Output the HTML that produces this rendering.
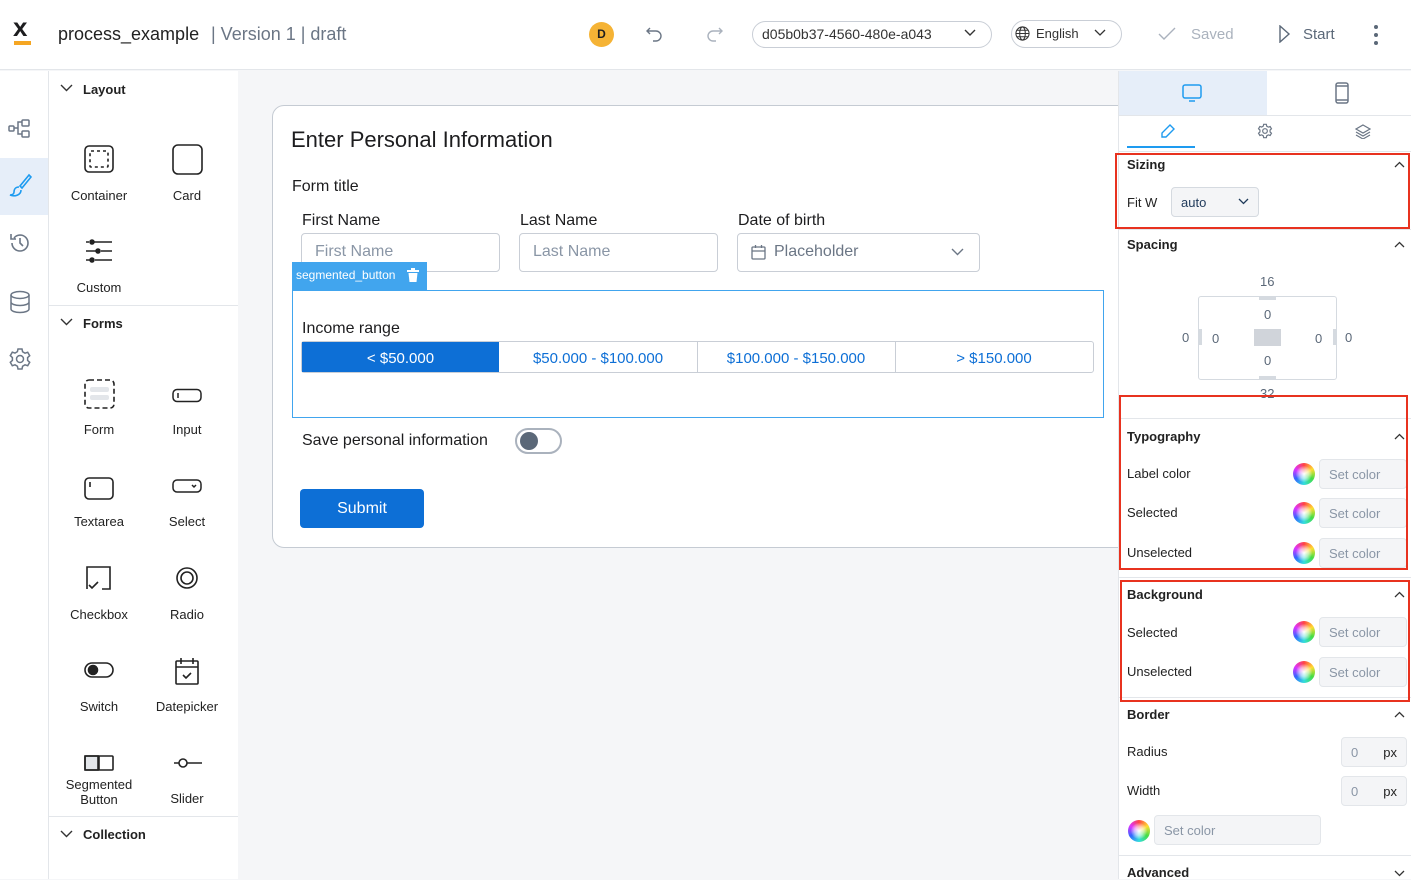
<!DOCTYPE html>
<html><head><meta charset="utf-8"><style>
*{box-sizing:border-box;margin:0;padding:0}
body{width:1411px;height:879px;overflow:hidden;position:relative;font-family:"Liberation Sans",sans-serif;color:#1d1d1f;background:#f5f6f8}
.a{position:absolute}
.t{position:absolute;white-space:nowrap}
svg{position:absolute}
.lbl{font-size:13px;color:#222;text-align:center;width:88px}
.sec{font-size:13px;font-weight:bold;color:#222}
.rp .t{font-size:13px;color:#222}
.sc{position:absolute;width:88px;height:30px;background:#f4f5f7;border:1px solid #e3e6ea;border-radius:4px;font-size:13px;color:#8a96a6;padding:7px 9px}
.wh{position:absolute;width:22px;height:22px;border-radius:50%;background:conic-gradient(#f44,#fd3,#4d4,#3dd,#36f,#d3f,#f44)}
.wh::after{content:"";position:absolute;inset:3px;border-radius:50%;background:radial-gradient(#fff 0,rgba(255,255,255,.6) 40%,rgba(255,255,255,0) 75%)}
.red{position:absolute;border:2px solid #e8321f}
.hr{position:absolute;height:1px;background:#e3e6ea}
</style></head><body>
<!-- header -->
<div class="a" style="left:0;top:0;width:1411px;height:70px;background:#fff;border-bottom:1px solid #e3e6ea"></div>
<div class="t" style="left:13px;top:14px;font-size:26px;font-weight:bold;line-height:26px">x</div>
<div class="a" style="left:14px;top:41px;width:17px;height:4px;background:#f5a623"></div>
<div class="t" style="left:58px;top:24px;font-size:18px;color:#222">process_example</div>
<div class="t" style="left:211px;top:24px;font-size:18px;color:#6b7685">| Version 1 | draft</div>
<div class="a" style="left:589px;top:22px;width:25px;height:25px;border-radius:50%;background:#f5b335;font-size:12px;font-weight:bold;text-align:center;line-height:25px">D</div>
<svg style="left:646px;top:26px" width="18" height="16" viewBox="0 0 18 16" fill="none" stroke="#6b7685" stroke-width="1.4"><path d="M4 2L1 5l3 3M1 5h9a5 5 0 010 10H7"/></svg>
<svg style="left:705px;top:26px" width="18" height="16" viewBox="0 0 18 16" fill="none" stroke="#aab2bd" stroke-width="1.4"><path d="M14 2l3 3-3 3M17 5H8a5 5 0 000 10h3"/></svg>
<div class="a" style="left:752px;top:21px;width:240px;height:27px;border:1px solid #c9ced6;border-radius:14px;background:#fff"></div>
<div class="t" style="left:762px;top:26px;font-size:14px;color:#333">d05b0b37-4560-480e-a043</div>
<svg style="left:964px;top:29px" width="12" height="8" fill="none" stroke="#333" stroke-width="1.4"><path d="M1 1l5 5 5-5"/></svg>
<div class="a" style="left:1011px;top:20px;width:111px;height:28px;border:1px solid #c9ced6;border-radius:14px;background:#fff"></div>
<svg style="left:1015px;top:26px" width="15" height="15" viewBox="0 0 16 16" fill="none" stroke="#333" stroke-width="1.1"><circle cx="8" cy="8" r="7"/><ellipse cx="8" cy="8" rx="3" ry="7"/><path d="M1 8h14M2 4.5h12M2 11.5h12"/></svg>
<div class="t" style="left:1036px;top:26px;font-size:13px;color:#333">English</div>
<svg style="left:1094px;top:29px" width="12" height="8" fill="none" stroke="#333" stroke-width="1.3"><path d="M1 1l5 5 5-5"/></svg>
<svg style="left:1158px;top:27px" width="18" height="14" fill="none" stroke="#aab2bd" stroke-width="1.4"><path d="M1 7l5 5 11-11"/></svg>
<div class="t" style="left:1191px;top:26px;font-size:15px;color:#aab2bd">Saved</div>
<svg style="left:1279px;top:25px" width="12" height="18" fill="none" stroke="#5b6878" stroke-width="1.4"><path d="M1 1l9 8-9 8z"/></svg>
<div class="t" style="left:1303px;top:26px;font-size:15px;color:#5b6878">Start</div>
<div class="a" style="left:1374px;top:25px;width:4px;height:4px;border-radius:2px;background:#5b6878;box-shadow:0 8px 0 #5b6878,0 16px 0 #5b6878"></div>

<!-- left rail -->
<div class="a" style="left:0;top:71px;width:48px;height:808px;background:#fff"></div>
<div class="a" style="left:0;top:158px;width:48px;height:57px;background:#e6eef9"></div>
<svg style="left:8px;top:118px" width="24" height="22" fill="none" stroke="#6b7685" stroke-width="1.5"><rect x="1" y="8" width="5" height="5" rx="1"/><rect x="14" y="2" width="7" height="6" rx="1"/><rect x="14" y="13" width="7" height="6" rx="1"/><path d="M6 10h4v-6h4M10 10v6h4"/></svg>
<svg style="left:8px;top:173px" width="24" height="26" fill="none" stroke="#1e9bf0" stroke-width="1.6"><path d="M21 2l-9 11 2 2 9-11zM11 14c-4 0-5 3-5 5s-2 3-4 3c5 2 11 0 11-5"/></svg>
<svg style="left:9px;top:232px" width="22" height="22" fill="none" stroke="#6b7685" stroke-width="1.6"><path d="M3 11a8 8 0 108-8 8 8 0 00-6 3M2 2v5h5M11 6v5l3 3"/></svg>
<svg style="left:9px;top:290px" width="22" height="24" fill="none" stroke="#6b7685" stroke-width="1.5"><ellipse cx="11" cy="5" rx="9" ry="3.5"/><path d="M2 5v14c0 2 4 3.5 9 3.5s9-1.5 9-3.5V5M2 12c0 2 4 3.5 9 3.5s9-1.5 9-3.5"/></svg>
<svg style="left:8px;top:347px" width="24" height="24" viewBox="0 0 24 24" fill="none" stroke="#6b7685" stroke-width="1.5"><circle cx="12" cy="12" r="3.5"/><path d="M10 2h4l.6 2.8 2.4 1.4 2.7-.9 2 3.4-2.1 1.9v2.8l2.1 1.9-2 3.4-2.7-.9-2.4 1.4L14 22h-4l-.6-2.8-2.4-1.4-2.7.9-2-3.4 2.1-1.9v-2.8L2.3 8.6l2-3.4 2.7.9 2.4-1.4z"/></svg>

<!-- components panel -->
<div class="a" style="left:48px;top:71px;width:190px;height:808px;background:#fff;border-left:1px solid #e3e6ea"></div>
<svg style="left:60px;top:84px" width="13" height="9" fill="none" stroke="#333" stroke-width="1.4"><path d="M1 1l5.5 5.5L12 1"/></svg>
<div class="t sec" style="left:83px;top:82px">Layout</div>
<svg style="left:84px;top:145px" width="30" height="28" fill="none" stroke="#222" stroke-width="1.6"><rect x="1" y="1" width="28" height="26" rx="4"/><rect x="6" y="6" width="18" height="16" rx="1" stroke-dasharray="3 3"/></svg>
<div class="t lbl" style="left:55px;top:188px">Container</div>
<svg style="left:172px;top:144px" width="32" height="32" fill="none" stroke="#222" stroke-width="1.6"><rect x="1" y="1" width="29" height="29" rx="5"/></svg>
<div class="t lbl" style="left:143px;top:188px">Card</div>
<svg style="left:85px;top:238px" width="28" height="26" fill="none" stroke="#222" stroke-width="1.5"><path d="M1 4h3M9 4h18M1 13h10M16 13h11M1 22h4M10 22h17"/><circle cx="7" cy="4" r="2" fill="#222"/><circle cx="13" cy="13" r="2" fill="#222"/><circle cx="7" cy="22" r="2" fill="#222"/></svg>
<div class="t lbl" style="left:55px;top:280px">Custom</div>
<div class="hr" style="left:49px;top:305px;width:189px"></div>
<svg style="left:60px;top:318px" width="13" height="9" fill="none" stroke="#333" stroke-width="1.4"><path d="M1 1l5.5 5.5L12 1"/></svg>
<div class="t sec" style="left:83px;top:316px">Forms</div>
<svg style="left:84px;top:379px" width="32" height="30" fill="none" stroke="#222" stroke-width="1.6"><rect x="1" y="1" width="29" height="28" rx="4" stroke-dasharray="5 3"/><rect x="6" y="8" width="19" height="5" rx="2" fill="#e3e6ea" stroke="none"/><rect x="6" y="16" width="19" height="5" rx="2" fill="#e3e6ea" stroke="none"/></svg>
<div class="t lbl" style="left:55px;top:422px">Form</div>
<svg style="left:172px;top:388px" width="30" height="16" fill="none" stroke="#222" stroke-width="1.5"><rect x="1" y="1.5" width="28" height="12" rx="4"/><path d="M6 5v5"/></svg>
<div class="t lbl" style="left:143px;top:422px">Input</div>
<svg style="left:84px;top:477px" width="30" height="24" fill="none" stroke="#222" stroke-width="1.6"><rect x="1" y="1" width="28" height="21" rx="4"/><path d="M6 5v5"/></svg>
<div class="t lbl" style="left:55px;top:514px">Textarea</div>
<svg style="left:172px;top:479px" width="30" height="15" fill="none" stroke="#222" stroke-width="1.5"><rect x="1" y="1" width="28" height="12" rx="4"/><path d="M20 6l2 2 2-2"/></svg>
<div class="t lbl" style="left:143px;top:514px">Select</div>
<svg style="left:86px;top:566px" width="26" height="26" fill="none" stroke="#222" stroke-width="1.6"><path d="M7 1h17v22h-8M1 17V1h6M1 17v6M3 19l3 3 6-6"/></svg>
<div class="t lbl" style="left:55px;top:607px">Checkbox</div>
<svg style="left:176px;top:567px" width="22" height="22" fill="none" stroke="#222" stroke-width="1.6"><circle cx="11" cy="11" r="10"/><circle cx="11" cy="11" r="6"/></svg>
<div class="t lbl" style="left:143px;top:607px">Radio</div>
<svg style="left:84px;top:661px" width="30" height="18" fill="none" stroke="#222" stroke-width="1.6"><rect x="1" y="2" width="28" height="14" rx="7"/><circle cx="9" cy="9" r="4.5" fill="#222"/></svg>
<div class="t lbl" style="left:55px;top:699px">Switch</div>
<svg style="left:175px;top:657px" width="24" height="28" fill="none" stroke="#222" stroke-width="1.6"><rect x="1" y="4" width="22" height="23" rx="1"/><path d="M1 10h22M6 1v6M18 1v6M8 18l3 3 5-5"/></svg>
<div class="t lbl" style="left:143px;top:699px">Datepicker</div>
<svg style="left:84px;top:755px" width="30" height="17" fill="none" stroke="#222" stroke-width="1.6"><rect x="1" y="1" width="13" height="14" fill="#e3e6ea"/><rect x="1" y="1" width="28" height="14" rx="1"/><path d="M15 1v14"/></svg>
<div class="t lbl" style="left:55px;top:777px;line-height:15px;white-space:normal">Segmented Button</div>
<svg style="left:173px;top:757px" width="30" height="12" fill="none" stroke="#222" stroke-width="1.6"><path d="M1 6h5M14 6h15"/><circle cx="10" cy="6" r="4"/></svg>
<div class="t lbl" style="left:143px;top:791px">Slider</div>
<div class="hr" style="left:49px;top:816px;width:189px"></div>
<svg style="left:60px;top:830px" width="13" height="9" fill="none" stroke="#333" stroke-width="1.4"><path d="M1 1l5.5 5.5L12 1"/></svg>
<div class="t sec" style="left:83px;top:827px">Collection</div>

<!-- canvas form -->
<div class="a" style="left:272px;top:105px;width:900px;height:443px;background:#fff;border:1px solid #c5cbd3;border-radius:12px"></div>
<div class="t" style="left:291px;top:127px;font-size:22px;color:#1d1d1f">Enter Personal Information</div>
<div class="t" style="left:292px;top:178px;font-size:16px">Form title</div>
<div class="t" style="left:302px;top:212px;font-size:16px">First Name</div>
<div class="t" style="left:520px;top:212px;font-size:16px">Last Name</div>
<div class="t" style="left:738px;top:212px;font-size:16px">Date of birth</div>
<div class="a" style="left:301px;top:233px;width:199px;height:39px;border:1px solid #c9ced6;border-radius:4px;background:#fff"></div>
<div class="t" style="left:315px;top:243px;font-size:16px;color:#8a96a6">First Name</div>
<div class="a" style="left:519px;top:233px;width:199px;height:39px;border:1px solid #c9ced6;border-radius:4px;background:#fff"></div>
<div class="t" style="left:533px;top:243px;font-size:16px;color:#8a96a6">Last Name</div>
<div class="a" style="left:737px;top:233px;width:243px;height:39px;border:1px solid #c9ced6;border-radius:4px;background:#fff"></div>
<svg style="left:751px;top:244px" width="15" height="16" fill="none" stroke="#6b7685" stroke-width="1.3"><rect x="1" y="3" width="13" height="12" rx="1"/><path d="M1 7h13M4.5 1v3M10.5 1v3"/></svg>
<div class="t" style="left:774px;top:243px;font-size:16px;color:#6b7685">Placeholder</div>
<svg style="left:951px;top:248px" width="13" height="8" fill="none" stroke="#6b7685" stroke-width="1.4"><path d="M1 1l5.5 5.5L12 1"/></svg>
<div class="a" style="left:292px;top:290px;width:812px;height:128px;border:1px solid #41a5ee"></div>
<div class="a" style="left:292px;top:262px;width:135px;height:28px;background:#41a5ee"></div>
<div class="t" style="left:296px;top:268px;font-size:12px;color:#fff">segmented_button</div>
<svg style="left:407px;top:268px" width="12" height="14" fill="#fff"><rect x="0" y="2" width="12" height="2"/><rect x="4" y="0" width="4" height="2"/><path d="M1.5 5h9l-1 9h-7z"/></svg>
<div class="t" style="left:302px;top:320px;font-size:16px">Income range</div>
<div class="a" style="left:301px;top:341px;width:793px;height:32px;border:1px solid #c9ced6;border-radius:3px;background:#fff"></div>
<div class="a" style="left:302px;top:342px;width:197px;height:30px;background:#0d6fd6"></div>
<div class="t" style="left:302px;top:350px;width:197px;text-align:center;font-size:15px;color:#fff">&lt; $50.000</div>
<div class="a" style="left:697px;top:342px;width:1px;height:30px;background:#c9ced6"></div>
<div class="a" style="left:895px;top:342px;width:1px;height:30px;background:#c9ced6"></div>
<div class="t" style="left:499px;top:350px;width:198px;text-align:center;font-size:15px;color:#0d6fd6">$50.000 - $100.000</div>
<div class="t" style="left:697px;top:350px;width:198px;text-align:center;font-size:15px;color:#0d6fd6">$100.000 - $150.000</div>
<div class="t" style="left:895px;top:350px;width:198px;text-align:center;font-size:15px;color:#0d6fd6">&gt; $150.000</div>
<div class="t" style="left:302px;top:432px;font-size:16px">Save personal information</div>
<div class="a" style="left:515px;top:428px;width:47px;height:26px;border:2px solid #aab2bd;border-radius:13px;background:#fff"></div>
<div class="a" style="left:520px;top:432px;width:18px;height:18px;border-radius:50%;background:#5b6878"></div>
<div class="a" style="left:300px;top:489px;width:124px;height:39px;background:#0d6fd6;border-radius:4px;color:#fff;font-size:16px;text-align:center;line-height:39px">Submit</div>

<!-- right panel -->
<div class="a rp" style="left:1118px;top:71px;width:293px;height:808px;background:#fff;border-left:1px solid #e3e6ea">
<div class="a" style="left:0;top:0;width:148px;height:44px;background:#e6eef9"></div>
<div class="hr" style="left:0;top:44px;width:293px"></div>
<svg style="left:63px;top:13px" width="20" height="18" fill="none" stroke="#1e9bf0" stroke-width="1.5"><rect x="1" y="1" width="18" height="13" rx="2"/><path d="M7 17h6"/></svg>
<svg style="left:216px;top:11px" width="14" height="22" fill="none" stroke="#6b7685" stroke-width="1.5"><rect x="1" y="1" width="12" height="20" rx="2"/><path d="M1 4h12M1 18h12"/></svg>
<svg style="left:41px;top:53px" width="15" height="15" fill="none" stroke="#1e9bf0" stroke-width="1.4"><path d="M10 1l4 4-8 8H2v-4z"/></svg>
<div class="a" style="left:8px;top:75px;width:68px;height:2px;background:#1e9bf0"></div>
<svg style="left:138px;top:52px" width="16" height="16" viewBox="0 0 24 24" fill="none" stroke="#6b7685" stroke-width="1.8"><circle cx="12" cy="12" r="3.5"/><path d="M10 2h4l.6 2.8 2.4 1.4 2.7-.9 2 3.4-2.1 1.9v2.8l2.1 1.9-2 3.4-2.7-.9-2.4 1.4L14 22h-4l-.6-2.8-2.4-1.4-2.7.9-2-3.4 2.1-1.9v-2.8L2.3 8.6l2-3.4 2.7.9 2.4-1.4z"/></svg>
<svg style="left:236px;top:53px" width="16" height="15" fill="none" stroke="#6b7685" stroke-width="1.2"><path d="M8 1l7 4-7 4-7-4zM1 8l7 4 7-4M1 11l7 4 7-4"/></svg>
<div class="hr" style="left:0;top:80px;width:293px"></div>
<div class="t sec" style="left:8px;top:86px">Sizing</div>
<div class="a" style="left:52px;top:116px;width:88px;height:30px;background:#f4f5f7;border:1px solid #d5dae0;border-radius:4px"></div>
<div class="t" style="left:8px;top:124px">Fit W</div>
<div class="t" style="left:62px;top:124px;color:#1f3a5a">auto</div>
<svg style="left:119px;top:127px" width="11" height="7" fill="none" stroke="#1f3a5a" stroke-width="1.3"><path d="M1 1l4.5 4.5L10 1"/></svg>
<div class="hr" style="left:0;top:158px;width:293px"></div>
<div class="t sec" style="left:8px;top:166px">Spacing</div>
<div class="a" style="left:79px;top:225px;width:139px;height:84px;border:1px solid #d5dae0;border-radius:3px"></div>
<div class="a" style="left:140px;top:225px;width:17px;height:4px;background:#d5dae0"></div>
<div class="a" style="left:140px;top:305px;width:17px;height:4px;background:#d5dae0"></div>
<div class="a" style="left:79px;top:258px;width:4px;height:16px;background:#d5dae0"></div>
<div class="a" style="left:214px;top:258px;width:4px;height:16px;background:#d5dae0"></div>
<div class="a" style="left:135px;top:258px;width:27px;height:17px;background:#d0d4da"></div>
<div class="t" style="left:141px;top:203px;color:#5b6878">16</div>
<div class="t" style="left:145px;top:236px;color:#5b6878">0</div>
<div class="t" style="left:145px;top:282px;color:#5b6878">0</div>
<div class="t" style="left:63px;top:259px;color:#5b6878">0</div>
<div class="t" style="left:93px;top:260px;color:#5b6878">0</div>
<div class="t" style="left:196px;top:260px;color:#5b6878">0</div>
<div class="t" style="left:226px;top:259px;color:#5b6878">0</div>
<div class="t" style="left:141px;top:315px;color:#5b6878">32</div>
<div class="hr" style="left:0;top:347px;width:293px"></div>
<div class="t sec" style="left:8px;top:358px">Typography</div>
<div class="t" style="left:8px;top:395px">Label color</div><div class="wh" style="left:174px;top:392px"></div><div class="sc" style="left:200px;top:388px">Set color</div>
<div class="t" style="left:8px;top:434px">Selected</div><div class="wh" style="left:174px;top:431px"></div><div class="sc" style="left:200px;top:427px">Set color</div>
<div class="t" style="left:8px;top:474px">Unselected</div><div class="wh" style="left:174px;top:471px"></div><div class="sc" style="left:200px;top:467px">Set color</div>
<div class="hr" style="left:0;top:506px;width:293px"></div>
<div class="t sec" style="left:8px;top:516px">Background</div>
<div class="t" style="left:8px;top:554px">Selected</div><div class="wh" style="left:174px;top:550px"></div><div class="sc" style="left:200px;top:546px">Set color</div>
<div class="t" style="left:8px;top:593px">Unselected</div><div class="wh" style="left:174px;top:590px"></div><div class="sc" style="left:200px;top:586px">Set color</div>
<div class="hr" style="left:0;top:626px;width:293px"></div>
<div class="t sec" style="left:8px;top:636px">Border</div>
<div class="t" style="left:8px;top:673px">Radius</div><div class="sc" style="left:222px;top:666px;width:66px">0<span style="position:absolute;right:9px;color:#222">px</span></div>
<div class="t" style="left:8px;top:712px">Width</div><div class="sc" style="left:222px;top:705px;width:66px">0<span style="position:absolute;right:9px;color:#222">px</span></div>
<div class="wh" style="left:9px;top:749px"></div><div class="sc" style="left:35px;top:744px;width:167px">Set color</div>
<div class="hr" style="left:0;top:784px;width:293px"></div>
<div class="t sec" style="left:8px;top:794px">Advanced</div>
</div>
<!-- chevrons -->
<svg style="left:1394px;top:161px" width="11" height="7" fill="none" stroke="#333" stroke-width="1.3"><path d="M1 6l4.5-4.5L10 6"/></svg>
<svg style="left:1394px;top:241px" width="11" height="7" fill="none" stroke="#333" stroke-width="1.3"><path d="M1 6l4.5-4.5L10 6"/></svg>
<svg style="left:1394px;top:433px" width="11" height="7" fill="none" stroke="#333" stroke-width="1.3"><path d="M1 6l4.5-4.5L10 6"/></svg>
<svg style="left:1394px;top:591px" width="11" height="7" fill="none" stroke="#333" stroke-width="1.3"><path d="M1 6l4.5-4.5L10 6"/></svg>
<svg style="left:1394px;top:711px" width="11" height="7" fill="none" stroke="#333" stroke-width="1.3"><path d="M1 6l4.5-4.5L10 6"/></svg>
<svg style="left:1394px;top:870px" width="11" height="7" fill="none" stroke="#333" stroke-width="1.3"><path d="M1 1l4.5 4.5L10 1"/></svg>
<!-- red boxes -->
<div class="red" style="left:1115px;top:153px;width:295px;height:76px"></div>
<div class="red" style="left:1119px;top:395px;width:289px;height:175px"></div>
<div class="red" style="left:1120px;top:580px;width:290px;height:122px"></div>
</body></html>
